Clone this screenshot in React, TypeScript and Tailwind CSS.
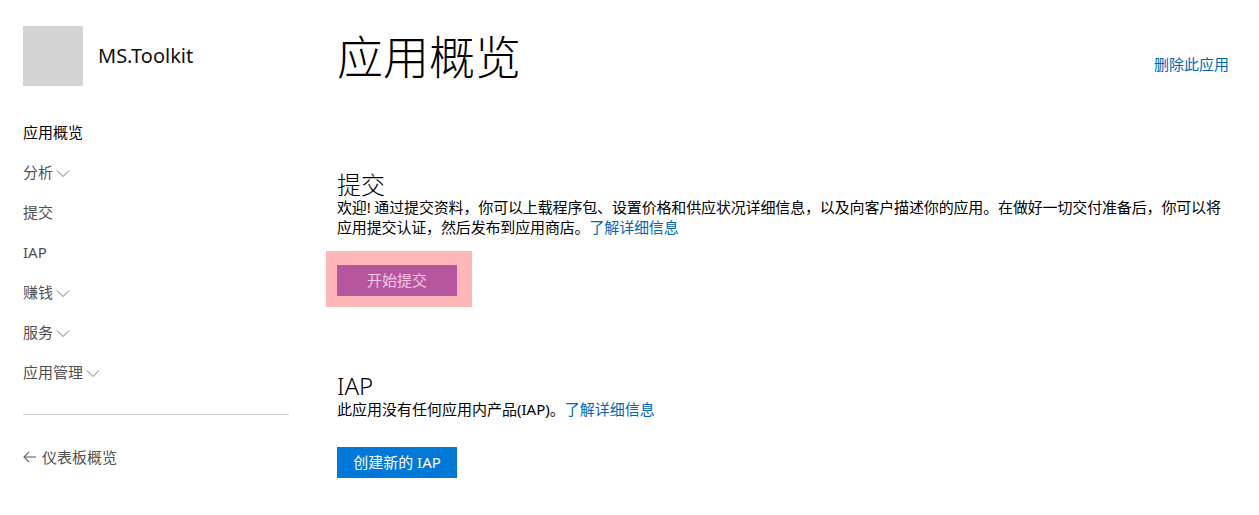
import React from "react";

const font = { fontFamily: '"Noto Sans", "Noto Sans CJK SC", sans-serif' };

function Chevron() {
  return (
    <svg width="14" height="9" viewBox="0 0 14 9" className="ml-[3px] mt-[2px]" fill="none">
      <polyline points="1,1.5 7,7.5 13,1.5" stroke="#777" strokeWidth="1" />
    </svg>
  );
}

const navItems: { label: string; active?: boolean; menu?: boolean }[] = [
  { label: "应用概览", active: true },
  { label: "分析", menu: true },
  { label: "提交" },
  { label: "IAP" },
  { label: "赚钱", menu: true },
  { label: "服务", menu: true },
  { label: "应用管理", menu: true },
];

export default function App() {
  return (
    <div className="flex min-h-[515px] w-[1259px] bg-white" style={font}>
      {/* Sidebar */}
      <aside className="w-[289px] shrink-0 pl-[23px] pt-[26px]">
        <div className="flex items-center gap-[15px]">
          <div className="h-[60px] w-[60px] bg-[#d3d3d3]" />
          <span className="text-[20px] leading-[28px] text-[#111]">MS.Toolkit</span>
        </div>

        <nav className="mt-[26px]">
          {navItems.map((item) => (
            <a
              key={item.label}
              href="#"
              className={`flex h-10 items-center text-[15px] leading-5 ${
                item.active ? "text-black" : "text-[#505050]"
              }`}
            >
              {item.label}
              {item.menu && <Chevron />}
            </a>
          ))}
        </nav>

        <div className="mt-[22px] h-px w-full bg-[#d0d0d0]" />

        <a href="#" className="mt-[22px] flex h-10 items-center text-[15px] text-[#505050]">
          <svg width="14" height="12" viewBox="0 0 14 12" fill="none" className="mr-[5px]">
            <polyline points="6,1 1,6 6,11" stroke="#666" strokeWidth="1.1" />
            <line x1="1" y1="6" x2="13" y2="6" stroke="#666" strokeWidth="1.1" />
          </svg>
          仪表板概览
        </a>
      </aside>

      {/* Main */}
      <main className="ml-[48px] w-[892px] pt-[28px]">
        <div className="flex items-end justify-between">
          <h1 className="text-[46px] font-light leading-[56px] text-black">应用概览</h1>
          <a href="#" className="mb-[10px] text-[15px] leading-5 text-[#0067b8]">
            删除此应用
          </a>
        </div>

        {/* 提交 */}
        <section className="mt-[89px]">
          <h2 className="text-[24px] font-light leading-6 text-black">提交</h2>
          <p className="text-[15px] leading-5 tracking-[-0.15px] text-black">
            欢迎! 通过提交资料，你可以上载程序包、设置价格和供应状况详细信息，以及向客户描述你的应用。在做好一切交付准备后，你可以将应用提交认证，然后发布到应用商店。
            <a href="#" className="text-[#0067b8]">
              了解详细信息
            </a>
          </p>
          <div className="-ml-[11px] mt-[14px] inline-block bg-[#ffb7b9] pb-[11px] pl-[11px] pr-[15px] pt-[14px]">
            <button className="flex h-[31px] w-[120px] items-center justify-center bg-[#b5569f] text-[15px] text-[#f6c6e6]">
              开始提交
            </button>
          </div>
        </section>

        {/* IAP */}
        <section className="mt-[67px]">
          <h2 className="text-[24px] font-light leading-6 text-black">IAP</h2>
          <p className="mt-px text-[15px] leading-5 text-black">
            此应用没有任何应用内产品(IAP)。
            <a href="#" className="text-[#0067b8]">
              了解详细信息
            </a>
          </p>
          <button className="mt-[28px] flex h-[31px] w-[120px] items-center justify-center bg-[#0078d7] text-[15px] text-white">
            创建新的 IAP
          </button>
        </section>
      </main>
    </div>
  );
}
